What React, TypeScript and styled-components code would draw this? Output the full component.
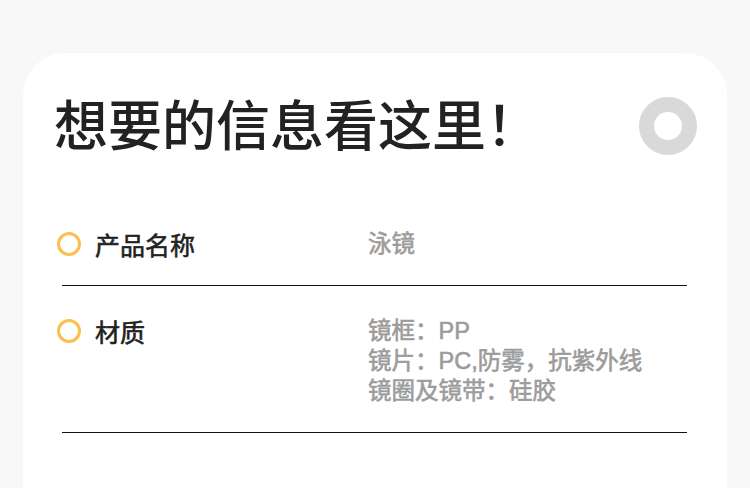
import React from 'react';
import styled, { createGlobalStyle } from 'styled-components';

const GlobalStyle = createGlobalStyle`
  html, body {
    margin: 0;
    padding: 0;
    background: #f8f8f8;
    font-family: 'Noto Sans CJK SC', 'Noto Sans', sans-serif;
  }
`;

const Page = styled.div`
  padding: 53px 23px 0;
  height: 488px;
  box-sizing: border-box;
  overflow: hidden;
`;

const Card = styled.section`
  background: #ffffff;
  border-radius: 42px;
  padding: 37px 30px 60px 31px;
  min-height: 480px;
  box-sizing: border-box;
`;

const Header = styled.header`
  display: flex;
  align-items: center;
  justify-content: space-between;
`;

const Title = styled.h1`
  margin: 0;
  font-size: 54px;
  line-height: 66px;
  font-weight: 500;
  color: #222222;
  letter-spacing: 0;
`;

const Ring = styled.span<{ $size: number; $width: number; $color: string }>`
  display: block;
  flex: none;
  width: ${p => p.$size}px;
  height: ${p => p.$size}px;
  border-radius: 50%;
  border: ${p => p.$width}px solid ${p => p.$color};
  box-sizing: border-box;
`;

const HeaderRing = styled(Ring)`
  margin-top: 6px;
`;

const List = styled.div`
  margin: 43px 10px 0 3px;
`;

const Row = styled.div`
  display: grid;
  grid-template-columns: 24px 259px 1fr;
  column-gap: 14px;
  align-items: start;
  padding: 30px 0 26px;
  border-bottom: 1px solid #111111;
  margin-left: 5px;

  & > ${Ring} {
    margin-left: -5px;
    margin-top: 3px;
  }
`;

const Label = styled.div`
  font-size: 25px;
  line-height: 30px;
  font-weight: 400;
  color: #222222;
  -webkit-text-stroke: 0.6px #222222;
  margin-left: -5px;
`;

const Values = styled.div`
  display: flex;
  flex-direction: column;
  margin-left: -5px;
`;

const Value = styled.div`
  font-family: 'Liberation Sans', 'Noto Sans CJK SC', sans-serif;
  font-size: 23.5px;
  line-height: 30px;
  font-weight: 400;
  color: #9c9c9c;
  -webkit-text-stroke: 0.6px #9c9c9c;
  white-space: nowrap;
`;

const rows = [
  { label: '产品名称', values: ['泳镜'] },
  { label: '材质', values: ['镜框：PP', '镜片：PC,防雾，抗紫外线', '镜圈及镜带：硅胶'] },
];

export default function App() {
  return (
    <Page>
      <GlobalStyle />
      <Card>
        <Header>
          <Title>想要的信息看这里！</Title>
          <HeaderRing $size={58} $width={15} $color="#d9d9d9" />
        </Header>
        <List>
          {rows.map(r => (
            <Row key={r.label}>
              <Ring $size={24} $width={3} $color="#fbbf4e" />
              <Label>{r.label}</Label>
              <Values>
                {r.values.map(v => (
                  <Value key={v}>{v}</Value>
                ))}
              </Values>
            </Row>
          ))}
        </List>
      </Card>
    </Page>
  );
}
